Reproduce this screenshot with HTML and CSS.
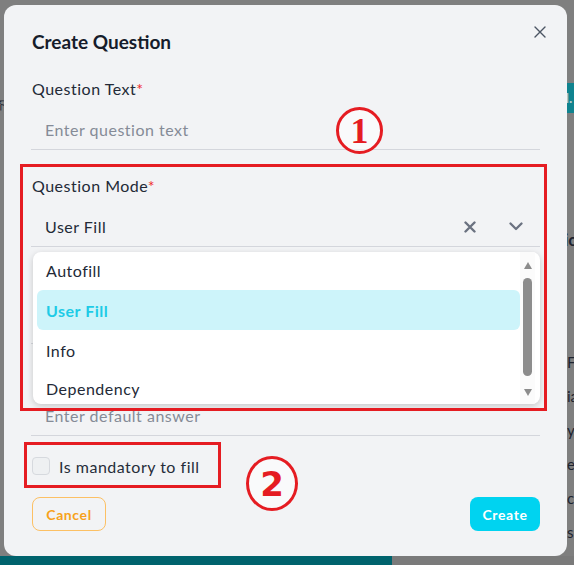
FILE: index.html
```html
<!DOCTYPE html>
<html lang="en">
<head>
<meta charset="utf-8">
<title>Create Question</title>
<link rel="stylesheet" href="styles.css">
</head>
<body>
<div class="page">
  <div class="page-body">
    <div class="page-main">
      <span class="main-glyph g1">齐</span>
      <span class="main-glyph g2">o</span>
    </div>
    <div class="page-side">
      <div class="side-tag">d.</div>
      <div class="side-head">ic</div>
      <div class="side-lines">
        <span>F</span><span>ia</span><span>y</span><span>e</span><span>c</span><span>s</span>
      </div>
    </div>
  </div>
  <div class="page-foot">
    <div class="foot-teal"></div>
    <div class="foot-rest"></div>
  </div>
</div>

<div class="modal" role="dialog" aria-label="Create Question">
  <button class="close" aria-label="Close">
    <svg width="12" height="12" viewBox="0 0 12 12"><path d="M1 1L11 11M11 1L1 11" stroke="#4b5563" stroke-width="1.4" stroke-linecap="round" fill="none"/></svg>
  </button>
  <h2 class="title">Create Question</h2>

  <div class="field f1">
    <label class="label">Question Text<span class="req">*</span></label>
    <div class="input placeholder">Enter question text</div>
  </div>

  <div class="field f2">
    <label class="label">Question Mode<span class="req">*</span></label>
    <div class="input select">
      <span class="value">User Fill</span>
      <span class="select-icons">
        <svg class="clear" width="12" height="12" viewBox="0 0 12 12"><path d="M1.5 1.5L10.5 10.5M10.5 1.5L1.5 10.5" stroke="#6b7280" stroke-width="2.4" stroke-linecap="round" fill="none"/></svg>
        <svg class="chev" width="14" height="9" viewBox="0 0 14 9"><path d="M1.5 1.5L7 7L12.5 1.5" stroke="#6b7280" stroke-width="2.3" stroke-linecap="round" stroke-linejoin="round" fill="none"/></svg>
      </span>
    </div>
  </div>

  <div class="field f3 covered">
    <label class="label">Question Type</label>
    <div class="input placeholder"></div>
  </div>

  <div class="field f4 covered">
    <label class="label">Default Answer</label>
    <div class="input placeholder">Enter default answer</div>
  </div>

  <label class="check">
    <span class="box"></span>
    <span>Is mandatory to fill</span>
  </label>

  <div class="actions">
    <button class="btn cancel">Cancel</button>
    <button class="btn create">Create</button>
  </div>

  <div class="dropdown">
    <ul class="options">
      <li class="option">Autofill</li>
      <li class="option active">User Fill</li>
      <li class="option">Info</li>
      <li class="option">Dependency</li>
    </ul>
    <div class="scrollbar">
      <span class="arrow up"></span>
      <span class="thumb"></span>
      <span class="arrow down"></span>
    </div>
  </div>

  <div class="mark mark-1"></div>
  <div class="mark mark-2"></div>
  <div class="num num-1">1</div>
  <div class="num num-2">2</div>
</div>
</body>
</html>
```

FILE: styles.css
```css
* { box-sizing: border-box; }

html, body {
  margin: 0;
  padding: 0;
}

body {
  width: 574px;
  height: 565px;
  overflow: hidden;
  position: relative;
  background: #7f7f7f;
  font-family: "Lato", "Noto Sans", sans-serif;
  color: #1f2633;
}

/* ---------- background page (dimmed) ---------- */
.page {
  display: flex;
  flex-direction: column;
  height: 565px;
}

.page-body {
  display: grid;
  grid-template-columns: 567px 7px;
  height: 556px;
}

.page-main {
  position: relative;
  background: #7f7f7f;
}

.main-glyph {
  position: absolute;
  left: -7px;
  font-size: 12px;
  color: #1e2430;
}
.main-glyph.g1 { top: 97px; }
.main-glyph.g2 { top: 291px; }

.page-side {
  background: #7f7f7f;
  padding-top: 83px;
  font-size: 15px;
  color: #1e2430;
  overflow: hidden;
  white-space: nowrap;
}

.side-tag {
  height: 30px;
  background: #10838f;
  color: #b8c9cc;
  font-weight: 700;
  font-size: 14px;
  line-height: 30px;
  margin-left: -6px;
}

.side-head {
  margin-top: 116px;
  font-size: 17px;
  font-weight: 700;
  line-height: 22px;
  margin-left: -3px;
}

.side-lines {
  margin-top: 94px;
  display: flex;
  flex-direction: column;
  line-height: 34px;
}
.side-lines span { display: block; }

.page-foot {
  display: flex;
  height: 9px;
}
.foot-teal {
  width: 392px;
  background: #00636d;
}
.foot-rest {
  flex: 1;
  background: #7a7a7a;
}

/* ---------- modal ---------- */
.modal {
  position: absolute;
  left: 4px;
  top: 5px;
  width: 563px;
  height: 551px;
  background: #f2f3f5;
  border-radius: 12px;
  padding: 25px 27px 0 27px;
  display: flex;
  flex-direction: column;
}

.close {
  position: absolute;
  right: 21px;
  top: 21px;
  width: 12px;
  height: 12px;
  padding: 0;
  border: 0;
  background: none;
  display: flex;
}

.title {
  margin: 0;
  font-size: 19px;
  font-weight: 700;
  line-height: 24px;
  color: #161c2b;
  padding-left: 1px;
}

.field {
  display: flex;
  flex-direction: column;
}

.label {
  font-size: 16px;
  line-height: 22px;
  letter-spacing: 0.5px;
  color: #232a37;
  padding-left: 1px;
}

.covered .label {
  visibility: hidden;
}

.req { color: #ef2b2b; }

.input {
  margin-top: 10px;
  height: 40px;
  border-bottom: 1px solid #d4d6dc;
  padding-left: 14px;
  display: flex;
  align-items: center;
  font-size: 16px;
  letter-spacing: 0.5px;
}

.placeholder { color: #858b97; }

.f1 { margin-top: 24px; }
.f2 { margin-top: 25px; }
.f3 { margin-top: 25px; }
.f4 { margin-top: 25px; }
.f4 .input { margin-top: 5px; }

.select {
  justify-content: space-between;
  color: #232a37;
  padding-right: 17px;
}

.select-icons {
  display: flex;
  align-items: center;
  gap: 33px;
}

.check {
  margin-top: 19px;
  display: flex;
  align-items: center;
  gap: 9px;
  height: 22px;
  font-size: 16px;
  letter-spacing: 0.5px;
  color: #262d3a;
}

.box {
  width: 18px;
  height: 18px;
  border: 1px solid #d6d9de;
  border-radius: 4px;
  background: #eef0f2;
  margin-left: 1px;
}

.actions {
  margin-top: 20px;
  display: flex;
  justify-content: space-between;
  padding-left: 1px;
}

.btn {
  height: 34px;
  border-radius: 8px;
  font-family: inherit;
  font-size: 14px;
  font-weight: 700;
  letter-spacing: 0.6px;
  cursor: pointer;
}

.cancel {
  width: 74px;
  background: transparent;
  border: 1px solid #fcc064;
  color: #f7a21b;
}

.create {
  width: 70px;
  background: #00d3f0;
  border: 0;
  color: #ffffff;
}

/* ---------- dropdown ---------- */
.dropdown {
  position: absolute;
  left: 29px;
  top: 247px;
  width: 507px;
  height: 152px;
  background: #ffffff;
  border-radius: 8px;
  box-shadow: 0 2px 6px rgba(0, 0, 0, 0.18);
  overflow: hidden;
  display: flex;
}

.options {
  list-style: none;
  margin: -2px 0 0 0;
  padding: 0 0 0 4px;
  flex: 1;
}

.option {
  height: 40px;
  display: flex;
  align-items: center;
  padding-left: 9px;
  font-size: 16px;
  letter-spacing: 0.5px;
  color: #232a37;
}

.option:last-child {
  height: 36px;
}

.option.active {
  background: #cdf4fa;
  border-radius: 6px;
  color: #1ecbe6;
  font-weight: 700;
}

.scrollbar {
  width: 15px;
  margin-right: 5px;
  display: flex;
  flex-direction: column;
  align-items: center;
  padding: 10px 0 8px;
  background: #fbfbfb;
}

.arrow {
  width: 0;
  height: 0;
  border-left: 4.5px solid transparent;
  border-right: 4.5px solid transparent;
}
.arrow.up { border-bottom: 7px solid #8c8c8c; }
.arrow.down { border-top: 7px solid #8c8c8c; }

.thumb {
  width: 9px;
  height: 98px;
  margin: 9px 0 auto;
  background: #8c8c8c;
  border-radius: 5px;
}

/* ---------- annotations ---------- */
.mark {
  position: absolute;
  border: 3px solid #e51c22;
}
.mark-1 {
  left: 16px;
  top: 159px;
  width: 527px;
  height: 247px;
}
.mark-2 {
  left: 20px;
  top: 437px;
  width: 197px;
  height: 46px;
}

.num {
  position: absolute;
  border: 3px solid #e51c22;
  border-radius: 50%;
  color: #e51c22;
  display: flex;
  align-items: center;
  justify-content: center;
  background: rgba(255, 255, 255, 0.55);
}
.num-1 {
  left: 332px;
  top: 102px;
  width: 47px;
  height: 47px;
  font-size: 36px;
  font-family: "Liberation Serif", serif;
  font-weight: 700;
}
.num-2 {
  left: 242px;
  top: 451px;
  width: 52px;
  height: 55px;
  font-size: 34px;
  font-family: "DejaVu Sans", sans-serif;
  font-weight: 700;
}
```
